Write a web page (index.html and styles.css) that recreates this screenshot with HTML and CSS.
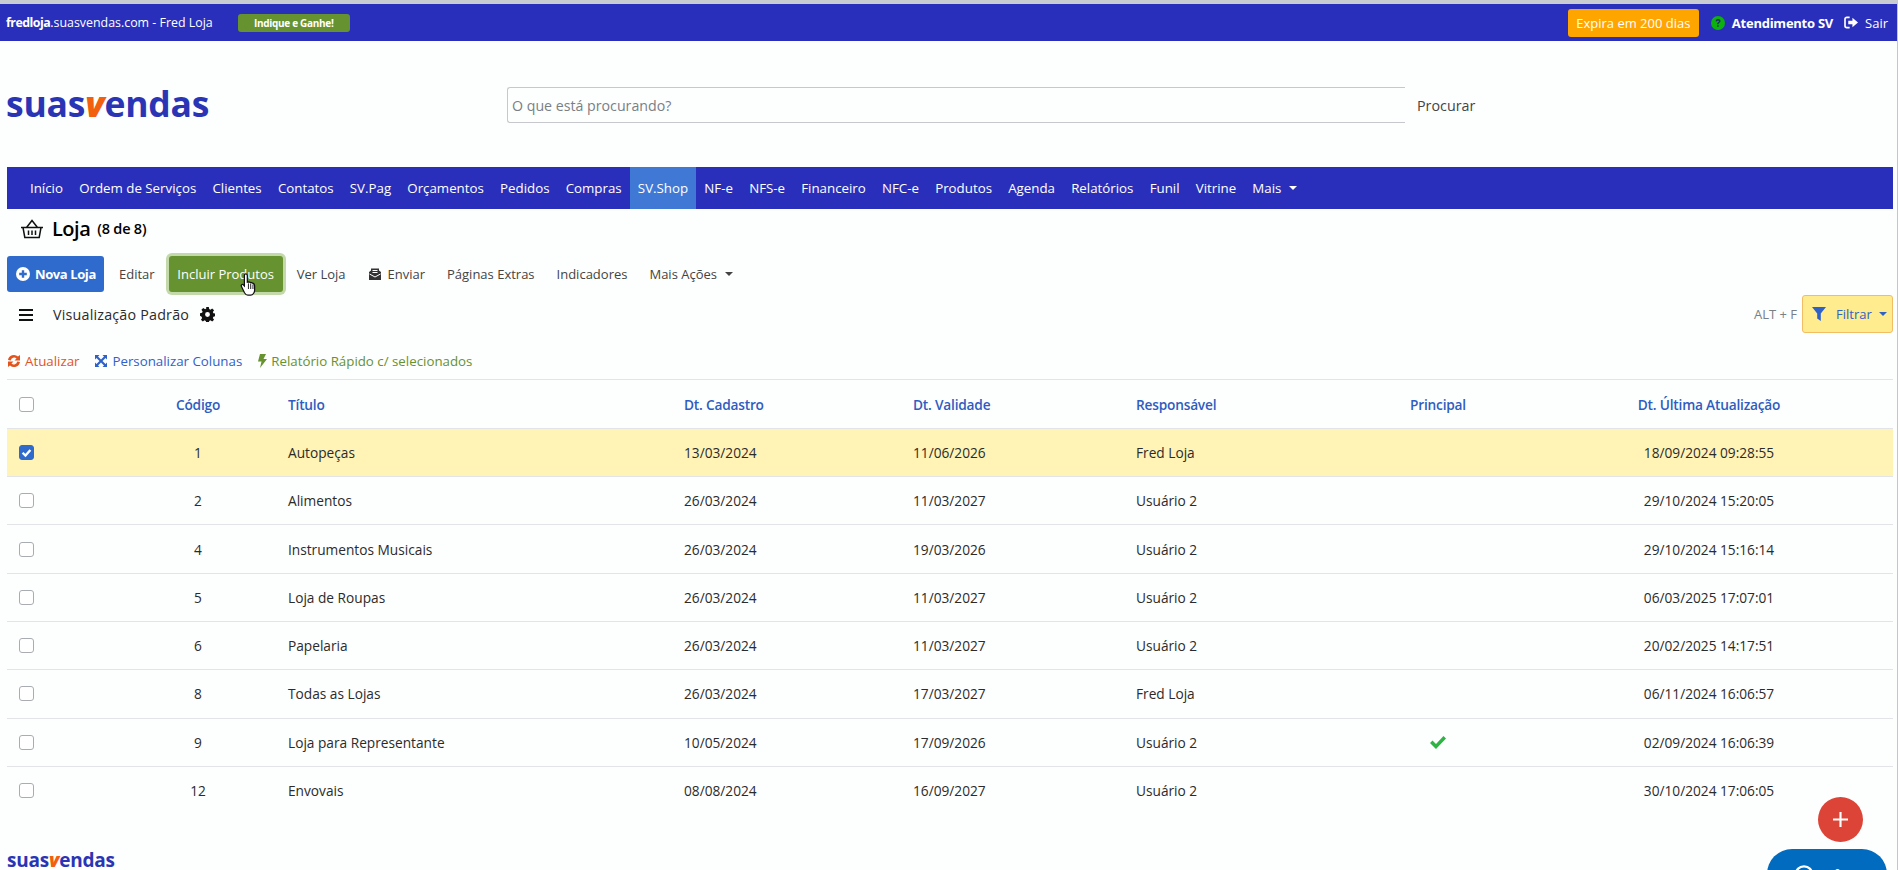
FILE: index.html
```html
<!DOCTYPE html>
<html lang="pt-BR">
<head>
<meta charset="utf-8">
<title>Loja - SuasVendas</title>
<link rel="stylesheet" href="styles.css">
</head>
<body>
<header class="topbar">
  <div class="top-left">
    <span class="domain"><b>fredloja</b>.suasvendas.com - Fred Loja</span>
    <a class="refer">Indique e Ganhe!</a>
  </div>
  <div class="top-right">
    <span class="expire">Expira em 200 dias</span>
    <svg class="ico-help" viewBox="0 0 14 14"><circle cx="7" cy="7" r="7" fill="#0db10d"/><path d="M4.6 5.2C4.8 3.8 5.8 3.1 7.1 3.1c1.4 0 2.4.8 2.4 2 0 1-.6 1.5-1.3 2-.5.3-.7.6-.7 1.2H6.1c0-1 .3-1.5 1-2 .6-.4.9-.7.9-1.1 0-.5-.4-.8-.9-.8-.6 0-1 .3-1.1 1zM6.1 9.3h1.5v1.5H6.1z" fill="#1c2a6b"/></svg>
    <b class="support">Atendimento SV</b>
    <svg class="ico-exit" viewBox="0 0 16 14"><path d="M6 1.5H3A2 2 0 0 0 1 3.5v7a2 2 0 0 0 2 2h3" fill="none" stroke="#fff" stroke-width="1.8"/><path d="M9 2l6 5-6 5V9H4.5V5H9z" fill="#fff"/></svg>
    <span>Sair</span>
  </div>
</header>

<section class="brandrow">
  <div class="logo">suas<i>v</i>endas</div>
  <div class="search">
    <input class="search-input" placeholder="O que está procurando?">
    <span class="search-btn">Procurar</span>
  </div>
</section>

<nav class="mainnav">
  <a>Início</a><a>Ordem de Serviços</a><a>Clientes</a><a>Contatos</a><a>SV.Pag</a><a>Orçamentos</a><a>Pedidos</a><a>Compras</a><a class="active">SV.Shop</a><a>NF-e</a><a>NFS-e</a><a>Financeiro</a><a>NFC-e</a><a>Produtos</a><a>Agenda</a><a>Relatórios</a><a>Funil</a><a>Vitrine</a><a>Mais<span class="caret"></span></a>
</nav>

<div class="pagetitle">
  <svg class="ico-basket" viewBox="0 0 24 20"><path d="M1 8.5h22M3 8.5l1.8 10h14.4l1.8-10M6.5 8.5L12 1.5l5.500 7M8.500 11.500v4.500M12 11.500v4.500M15.500 11.500v4.500" fill="none" stroke="#111" stroke-width="1.500"/></svg>
  <h1>Loja</h1><span class="count">(8 de 8)</span>
</div>

<div class="actions">
  <a class="btn primary"><svg class="ico-plus" viewBox="0 0 14 14"><circle cx="7" cy="7" r="7" fill="#fff"/><path d="M7 3.200v7.600M3.200 7h7.600" stroke="#2f6bcc" stroke-width="2.400"/></svg>Nova Loja</a>
  <a class="btn">Editar</a>
  <a class="btn success">Incluir Produtos</a>
  <a class="btn">Ver Loja</a>
  <a class="btn"><svg class="ico-send" viewBox="0 0 14 14"><path d="M1 5l2-1.500V1.500h8V3.500L13 5v8H1z" fill="#333"/><path d="M4.500 3.500h5M4.500 5.500h5" stroke="#fff" stroke-width="1"/><path d="M1.500 7l5.500 3 5.500-3" fill="none" stroke="#fff" stroke-width="1"/></svg>Enviar</a>
  <a class="btn">Páginas Extras</a>
  <a class="btn">Indicadores</a>
  <a class="btn">Mais Ações<span class="caret dark"></span></a>
</div>

<div class="viewrow">
  <div class="view-left">
    <svg class="ico-menu" viewBox="0 0 14 12"><path d="M0 1h14M0 6h14M0 11h14" stroke="#111" stroke-width="2"/></svg>
    <span>Visualização Padrão</span>
    <svg class="ico-gear" viewBox="0 0 16 16"><path fill-rule="evenodd" fill="#111" d="M6.600 0h2.800l.4 2.200 1.300.6 1.900-1.300 2 2-1.300 1.900.6 1.300 2.200.4v2.800l-2.200.4-.6 1.300 1.300 1.900-2 2-1.900-1.300-1.300.6-.4 2.200H6.600l-.4-2.200-1.300-.6-1.900 1.300-2-2 1.300-1.900-.6-1.300L0 9.400V6.600l2.200-.4.6-1.300L1.500 3l2-2 1.900 1.300 1.300-.6zM8 5.400a2.600 2.600 0 1 0 0 5.200 2.600 2.600 0 0 0 0-5.200z"/></svg>
  </div>
  <div class="view-right">
    <span class="hotkey">ALT + F</span>
    <a class="filter"><svg class="ico-filter" viewBox="0 0 14 14"><path d="M0 0h14L8.800 6.500V14L5.200 11.500V6.500z" fill="#2f62c9"/></svg>Filtrar<span class="caret blue"></span></a>
  </div>
</div>

<div class="tools">
  <a class="tool orange"><svg viewBox="0 0 14 14"><path d="M1 6a6 6 0 0 1 10-3.400L13 1v5.500H7.500l2-2A3.400 3.400 0 0 0 3.800 6.500zM13 8a6 6 0 0 1-10 3.400L1 13V7.500h5.500l-2 2A3.400 3.400 0 0 0 10.200 7.500z" fill="#e2541c"/></svg>Atualizar</a>
  <a class="tool blue"><svg viewBox="0 0 14 14"><path d="M1 1h4.500L4 2.500 7 5.500l3-3L8.500 1H13v4.500L11.500 4l-3 3 3 3L13 8.500V13H8.500l1.500-1.500-3-3-3 3L5.500 13H1V8.500L2.500 10l3-3-3-3L1 5.500z" fill="#2f62c9"/></svg>Personalizar Colunas</a>
  <a class="tool green"><svg viewBox="0 0 10 14"><path d="M3 0h6L6.500 5H10L3 14l1.500-6.500H1z" fill="#66922f"/></svg>Relatório Rápido c/ selecionados</a>
</div>

<table class="grid">
  <colgroup><col class="c1"><col class="c2"><col class="c3"><col class="c4"><col class="c5"><col class="c6"><col class="c7"><col class="c8"></colgroup>
  <thead>
    <tr><th><span class="check"></span></th><th class="center">Código</th><th>Título</th><th>Dt. Cadastro</th><th>Dt. Validade</th><th>Responsável</th><th class="center">Principal</th><th class="center">Dt. Última Atualização</th></tr>
  </thead>
  <tbody>
    <tr class="selected"><td><span class="check on"><svg viewBox="0 0 10 10"><path d="M2 5.200l2.200 2.200L8 3" fill="none" stroke="#fff" stroke-width="1.800"/></svg></span></td><td class="center">1</td><td>Autopeças</td><td>13/03/2024</td><td>11/06/2026</td><td>Fred Loja</td><td></td><td class="center">18/09/2024 09:28:55</td></tr>
    <tr><td><span class="check"></span></td><td class="center">2</td><td>Alimentos</td><td>26/03/2024</td><td>11/03/2027</td><td>Usuário 2</td><td></td><td class="center">29/10/2024 15:20:05</td></tr>
    <tr><td><span class="check"></span></td><td class="center">4</td><td>Instrumentos Musicais</td><td>26/03/2024</td><td>19/03/2026</td><td>Usuário 2</td><td></td><td class="center">29/10/2024 15:16:14</td></tr>
    <tr><td><span class="check"></span></td><td class="center">5</td><td>Loja de Roupas</td><td>26/03/2024</td><td>11/03/2027</td><td>Usuário 2</td><td></td><td class="center">06/03/2025 17:07:01</td></tr>
    <tr><td><span class="check"></span></td><td class="center">6</td><td>Papelaria</td><td>26/03/2024</td><td>11/03/2027</td><td>Usuário 2</td><td></td><td class="center">20/02/2025 14:17:51</td></tr>
    <tr><td><span class="check"></span></td><td class="center">8</td><td>Todas as Lojas</td><td>26/03/2024</td><td>17/03/2027</td><td>Fred Loja</td><td></td><td class="center">06/11/2024 16:06:57</td></tr>
    <tr><td><span class="check"></span></td><td class="center">9</td><td>Loja para Representante</td><td>10/05/2024</td><td>17/09/2026</td><td>Usuário 2</td><td class="center"><svg class="ico-ok" viewBox="0 0 16 13"><path d="M0 7l2.500-2.500L6 8l7.500-8L16 2.500 6 13z" fill="#2fb344"/></svg></td><td class="center">02/09/2024 16:06:39</td></tr>
    <tr><td><span class="check"></span></td><td class="center">12</td><td>Envovais</td><td>08/08/2024</td><td>16/09/2027</td><td>Usuário 2</td><td></td><td class="center">30/10/2024 17:06:05</td></tr>
  </tbody>
</table>

<footer class="foot"><div class="logo small">suas<i>v</i>endas</div></footer>

<svg class="cursor" viewBox="0 0 16 22"><path d="M5 1.500c1 0 1.500.6 1.500 1.500v6l1-.3 1 .2 1 .3 1.300.3c1.400.4 2.200 1.300 2.200 2.800v3.700c0 2-1.500 4.500-3.500 4.500H7c-1.500 0-2.300-1-3-2.200L1.200 12.500c-.5-1 .7-2 1.700-1.200l1 1V3c0-.9.200-1.500 1.100-1.500z" fill="#fff" stroke="#111" stroke-width="1.100"/><path d="M7.500 10v5M9.500 10v5M11.500 11v4" stroke="#111" stroke-width=".8"/></svg>
<a class="fab"><svg viewBox="0 0 14 14"><path d="M7 0v14M0 7h14" stroke="#fff" stroke-width="2"/></svg></a>
<div class="chat"><svg viewBox="0 0 22 22"><circle cx="11" cy="11" r="9.500" fill="none" stroke="#fff" stroke-width="2.500"/></svg><span class="chat-dot"></span></div>
</body>
</html>
```
FILE: styles.css
```css
* { box-sizing: border-box; }
html, body { margin: 0; height: 870px; overflow: hidden; }
body {
  background: #fdfefe;
  color: #2b2b2b;
  font-family: "Open Sans", "Noto Sans", sans-serif;
  font-size: 13px;
  border-top: 4px solid #c9ccd1;
  border-right: 1px solid #c4c6ca;
}
a { color: inherit; text-decoration: none; }
svg { display: block; flex: none; }

.topbar {
  height: 37px;
  background: #2a2fbb;
  color: #fff;
  display: flex;
  justify-content: space-between;
  align-items: center;
  padding: 0 9px 0 6px;
}
.top-left, .top-right { display: flex; align-items: center; }
.domain { font-size: 12.400px; }
.domain b { font-weight: 700; letter-spacing: -.5px; }
.refer {
  margin-left: 25px;
  width: 112px;
  height: 18px;
  line-height: 18px;
  text-align: center;
  background: #66922f;
  border-radius: 3px;
  font-size: 10px;
  font-weight: 700;
  letter-spacing: -.3px;
}
.expire {
  background: #ffa500;
  border-radius: 3px;
  height: 28px;
  line-height: 28px;
  width: 131px;
  text-align: center;
  margin-right: 12px;
  white-space: nowrap;
}
.ico-help { width: 14px; height: 14px; margin-right: 7px; }
.support { font-weight: 700; letter-spacing: -.25px; margin-right: 11px; }
.ico-exit { width: 15px; height: 13px; margin-right: 6px; }

.brandrow {
  height: 126px;
  display: flex;
  align-items: flex-start;
  padding: 39px 0 0 6px;
}
.logo {
  width: 501px;
  font-family: "Open Sans", sans-serif;
  font-size: 35.500px;
  line-height: 46px;
  font-weight: 700;
  color: #2a35b5;
  letter-spacing: -.2px;
}
.logo i { color: #f2600f; font-weight: 800; }
.search { display: flex; align-items: center; height: 36px; margin-top: 7px; }
.search-input {
  width: 898px;
  height: 36px;
  border: 1px solid #c6c8cc;
  border-right: 0;
  border-radius: 3px 0 0 3px;
  padding: 0 4px;
  background: #fdfefe;
  font: inherit;
  font-size: 14.200px;
  outline: none;
}
.search-input::placeholder { color: #7a7f85; }
.search-btn { margin-left: 12px; font-size: 14.300px; color: #444; }

.mainnav {
  height: 42px;
  margin: 0 4px 0 7px;
  padding-left: 14.900px;
  background: #2a2fbb;
  color: #fff;
  font-size: 13.300px;
  display: flex;
  align-items: stretch;
}
.mainnav a {
  padding: 0 8.100px;
  display: flex;
  align-items: center;
  white-space: nowrap;
}
.mainnav a.active { background: #4078d6; }
.caret {
  display: inline-block;
  margin-left: 8px;
  border-top: 4px solid #fff;
  border-left: 4px solid transparent;
  border-right: 4px solid transparent;
}
.caret.dark { border-top-color: #444; }
.caret.blue { border-top-color: #2f62c9; }

.pagetitle {
  height: 47px;
  padding: 0 0 8px 20px;
  display: flex;
  align-items: center;
  color: #000;
}
.ico-basket { width: 24px; height: 20px; margin-right: 8px; }
.pagetitle h1 { margin: 0; font-size: 20px; font-weight: 600; letter-spacing: -.5px; }
.count { margin-left: 7px; font-size: 14.500px; font-weight: 600; letter-spacing: -.2px; }

.actions {
  height: 36px;
  margin-left: 7px;
  display: flex;
  align-items: stretch;
  color: #444;
}
.btn {
  display: flex;
  align-items: center;
  padding: 0 11px;
  white-space: nowrap;
  border-radius: 3px;
}
.btn.primary {
  background: #2f6bcc;
  color: #fff;
  font-weight: 700;
  letter-spacing: -.4px;
  padding: 0 9px;
  width: 97px;
  margin-right: 4px;
}
.btn.success {
  background: #66922f;
  color: #fff;
  width: 114px;
  margin: 0 3px 0 3px;
  padding: 0;
  justify-content: center;
  box-shadow: 0 0 0 3px #c3d9a9;
}
.ico-plus { width: 14px; height: 14px; margin-right: 5px; }
.ico-send { width: 14px; height: 14px; margin-right: 6px; }

.viewrow {
  height: 42px;
  padding: 2px 4px 0 19px;
  display: flex;
  justify-content: space-between;
  align-items: center;
}
.view-left {
  display: flex;
  align-items: center;
  font-size: 14.300px;
  letter-spacing: .2px;
  margin-top: 1px;
}
.ico-menu { width: 14px; height: 12px; margin-right: 20px; }
.ico-gear { width: 15px; height: 15px; margin-left: 11px; }
.view-right { display: flex; align-items: center; }
.hotkey { color: #7a7f85; margin-right: 5px; }
.filter {
  width: 91px;
  height: 38px;
  background: #ffec8f;
  border: 1px solid #f3bd63;
  border-radius: 3px;
  color: #2f62c9;
  display: flex;
  align-items: center;
  padding-left: 9px;
}
.ico-filter { width: 14px; height: 14px; margin-right: 10px; }
.filter .caret { margin-left: 7px; }

.tools {
  height: 46px;
  margin: 0 4px 0 7px;
  padding-top: 8px;
  border-bottom: 1px solid #e2e4e7;
  display: flex;
  align-items: center;
  font-size: 13.300px;
}
.tool { display: flex; align-items: center; margin-right: 15px; }
.tool svg { width: 14px; height: 14px; margin-right: 4px; }
.tool.green svg { width: 10px; }
.tool.orange { color: #e2541c; }
.tool.blue { color: #2f62c9; }
.tool.green { color: #66922f; }

.grid {
  width: 1886px;
  margin-left: 7px;
  table-layout: fixed;
  border-collapse: collapse;
  font-size: 13.700px;
}
.c1 { width: 113px; } .c2 { width: 156px; } .c3 { width: 396px; } .c4 { width: 229px; }
.c5 { width: 223px; } .c6 { width: 237px; } .c7 { width: 154px; } .c8 { width: 378px; }
.grid th, .grid td {
  height: 48.300px;
  padding: 0 12px;
  text-align: left;
  border-bottom: 1px solid #e2e4e7;
  white-space: nowrap;
}
.grid th:last-child, .grid td:last-child { padding-left: 22px; }
.grid tbody tr:last-child td { border-bottom: 0; }
.grid th { color: #2f5cc0; font-weight: 600; letter-spacing: -.2px; padding-top: 2px; }
.grid .center { text-align: center; }
.grid .selected td { background: #fff3b6; }
.check {
  display: block;
  width: 15px;
  height: 15px;
  border: 1px solid #a9adb2;
  border-radius: 3px;
  background: #fff;
}
.check.on { background: #2f6bcc; border-color: #2f6bcc; }
.check svg { width: 13px; height: 13px; }
.ico-ok { width: 16px; height: 13px; margin: 0 auto; }

.foot { padding: 36px 0 0 7px; }
.logo.small { font-size: 19px; line-height: 19px; width: auto; }

.cursor { position: fixed; left: 240px; top: 272px; width: 18px; height: 25px; }
.fab {
  position: fixed;
  left: 1818px;
  top: 797px;
  width: 45px;
  height: 45px;
  border-radius: 50%;
  background: #db4437;
  display: flex;
  align-items: center;
  justify-content: center;
}
.fab svg { width: 15px; height: 15px; }
.chat {
  position: fixed;
  left: 1767px;
  top: 849px;
  width: 120px;
  height: 50px;
  border-radius: 25px;
  background: #006bbf;
  padding: 16px 0 0 27px;
}
.chat svg { width: 20px; height: 20px; }
.chat-dot {
  position: absolute;
  left: 68px;
  top: 20px;
  width: 5px;
  height: 5px;
  border-radius: 50%;
  background: #fff;
}
```
